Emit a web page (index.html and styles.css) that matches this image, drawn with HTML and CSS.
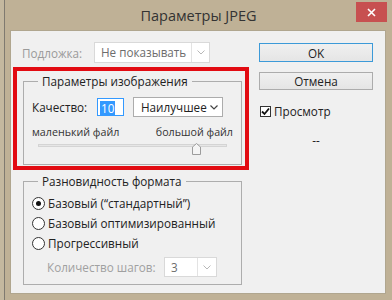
FILE: index.html
```html
<!DOCTYPE html>
<html lang="ru">
<head>
  <meta charset="UTF-8" />
  <meta name="viewport" content="width=device-width, initial-scale=1.0"/>
  <title>Параметры JPEG</title>
  <link rel="stylesheet" href="styles.css">
</head>
<body>

  <div class="window">
    <div class="titlebar">
      <span></span>
      <div class="title">Параметры JPEG</div>
      <button class="close" title="Закрыть">
        <svg width="9" height="9" viewBox="0 0 9 9"><path d="M1 1 L8 8 M8 1 L1 8" stroke="#fff" stroke-width="1.6" fill="none"/></svg>
      </button>
    </div>

    <div class="client">
      <div class="left">

        <div class="matte-row">
          <span class="matte-label">Подложка:</span>
          <div class="select select-matte is-disabled">
            <span class="select-value">Не показывать</span>
            <span class="select-arrow">
              <svg width="8" height="5" viewBox="0 0 8 5"><path d="M0.5 0.5 L4 4 L7.5 0.5" stroke="#b8b8b8" fill="none"/></svg>
            </span>
          </div>
        </div>

        <div class="highlight">
          <fieldset class="group">
            <legend>Параметры изображения</legend>
            <div class="quality-row">
              <span class="quality-label">Качество:</span>
              <span class="quality-input"><span class="selected-text">10</span></span>
              <div class="select select-quality">
                <span class="select-value">Наилучшее</span>
                <span class="select-arrow">
                  <svg width="8" height="5" viewBox="0 0 8 5"><path d="M0.5 0.5 L4 4 L7.5 0.5" stroke="#444" stroke-width="1.2" fill="none"/></svg>
                </span>
              </div>
            </div>
            <div class="size-labels">
              <span>маленький файл</span>
              <span>большой файл</span>
            </div>
            <div class="slider">
              <div class="track"></div>
              <svg class="thumb" style="left: 154px" width="9" height="12" viewBox="0 0 9 12">
                <path d="M0.5 11.5 L0.5 4 L4.5 0.5 L8.5 4 L8.5 11.5 Z" fill="#f4f4f4" stroke="#9c9c9c"/>
              </svg>
            </div>
          </fieldset>
        </div>

        <fieldset class="group format">
          <legend>Разновидность формата</legend>
          <label class="radio-row"><span class="radio checked"></span>Базовый (“стандартный”)</label>
          <label class="radio-row"><span class="radio"></span>Базовый оптимизированный</label>
          <label class="radio-row"><span class="radio"></span>Прогрессивный</label>
          <div class="steps-row">
            <span class="steps-label">Количество шагов:</span>
            <div class="select select-steps is-disabled">
              <span class="select-value">3</span>
              <span class="select-arrow">
                <svg width="8" height="5" viewBox="0 0 8 5"><path d="M0.5 0.5 L4 4 L7.5 0.5" stroke="#b8b8b8" fill="none"/></svg>
              </span>
            </div>
          </div>
        </fieldset>

      </div>

      <div class="right">
        <button class="btn btn-default">OK</button>
        <button class="btn">Отмена</button>
        <label class="check-row">
          <span class="checkbox">
            <svg width="9" height="9" viewBox="0 0 9 9"><path d="M1 4.5 L3.5 7 L8 1.5" stroke="#111" stroke-width="1.8" fill="none"/></svg>
          </span>
          Просмотр
        </label>
        <div class="file-size">--</div>
      </div>
    </div>
  </div>

</body>
</html>
```

FILE: styles.css
```css
body {
  margin: 0;
  width: 392px;
  height: 300px;
  overflow: hidden;
  background-color: #c4b89f;
  font-family: "Open Sans", "Noto Sans", sans-serif;
  font-size: 11.7px;
  color: #222;
}

.window {
  margin-left: 4px;
  width: 387px;
  height: 300px;
  border-left: 1px solid #7f7a70;
  background-color: #bfb196;
}

/* title bar */

.titlebar {
  display: grid;
  grid-template-columns: 1fr auto 1fr;
  align-items: start;
  height: 31px;
}

.title {
  padding-top: 6px;
  font-size: 14.5px;
  color: #333;
}

.close {
  justify-self: end;
  margin: 2px 5px 0 0;
  width: 31px;
  height: 20px;
  padding: 0;
  border: none;
  background-color: #c75050;
  display: flex;
  align-items: center;
  justify-content: center;
}

/* client area */

.client {
  display: flex;
  box-sizing: border-box;
  margin-left: 6px;
  width: 374px;
  height: 262px;
  padding: 11px 0 0 2px;
  background-color: #f0f0f0;
  box-shadow: 0 0 0 1px #b0a68f;
}

.left {
  width: 236px;
}

.right {
  margin-left: 10px;
  width: 114px;
  padding-top: 1px;
  display: flex;
  flex-direction: column;
}

/* selects */

.select {
  display: flex;
  box-sizing: border-box;
  background-color: #fff;
  border: 1px solid #acacac;
}

.select-value {
  flex: 1;
  padding-left: 6px;
  line-height: 18px;
  white-space: nowrap;
}

.select-arrow {
  display: flex;
  align-items: center;
  justify-content: center;
  width: 16px;
}

.select.is-disabled {
  border-color: #d9d9d9;
  color: #6d6d6d;
}

.select.is-disabled .select-arrow {
  border-left: 1px solid #e3e3e3;
}

.matte-row {
  display: flex;
  align-items: center;
  height: 21px;
}

.matte-label {
  width: 72px;
  margin-left: 9px;
  color: #9a9a9a;
}

.select-matte {
  width: 116px;
  height: 21px;
}

.select-matte .select-arrow {
  width: 17px;
}

/* red highlight frame */

.highlight {
  margin-top: 4px;
  border: 4px solid #e20b12;
  padding: 2px 3px 1px 6px;
}

/* group boxes */

.group {
  margin: 0;
  width: 219px;
  box-sizing: border-box;
  border: 1px solid #adadad;
  padding: 8px 8px 9px 8px;
}

.group legend {
  margin-left: 6px;
  padding: 0 4px;
  line-height: 16px;
  color: #222;
}

.quality-row {
  display: flex;
  align-items: center;
  height: 20px;
}

.quality-label {
  width: 65px;
}

.quality-input {
  box-sizing: border-box;
  width: 27px;
  height: 18px;
  border: 1px solid #3399ff;
  background-color: #fff;
  padding: 1px 0 0 2px;
}

.selected-text {
  display: inline-block;
  padding: 0 1px;
  line-height: 15px;
  background-color: #3399ff;
  color: #fff;
}

.select-quality {
  margin-left: 9px;
  width: 90px;
  height: 20px;
}

.select-quality .select-value {
  padding-left: 7px;
}

.size-labels {
  display: flex;
  justify-content: space-between;
  margin-top: 8px;
  font-size: 10.7px;
  line-height: 14px;
  color: #333;
}

.slider {
  position: relative;
  margin: 3px 6px 0 6px;
  height: 11px;
}

.track {
  margin-top: 5px;
  height: 1px;
  border: 1px solid #d4d4d4;
  background-color: #e6e6e6;
}

.thumb {
  position: absolute;
  top: -1px;
}

/* format group */

.format {
  margin: 3px 0 0 10px;
  padding: 4px 8px 7px 8px;
}

.radio-row {
  display: flex;
  align-items: center;
  gap: 3px;
  height: 20px;
}

.radio {
  box-sizing: border-box;
  width: 13px;
  height: 13px;
  border: 1px solid #333;
  border-radius: 50%;
  background-color: #fff;
  display: flex;
  align-items: center;
  justify-content: center;
}

.radio.checked::after {
  content: "";
  width: 5px;
  height: 5px;
  border-radius: 50%;
  background-color: #111;
}

.steps-row {
  display: flex;
  align-items: center;
  margin-top: 4px;
}

.steps-label {
  width: 117px;
  margin-left: 15px;
  color: #a0a0a0;
  white-space: nowrap;
}

.select-steps {
  width: 53px;
  height: 20px;
}

.select-steps .select-arrow {
  width: 18px;
}

/* right column */

.btn {
  box-sizing: border-box;
  width: 114px;
  height: 19px;
  padding: 0;
  border: 1px solid #acacac;
  background: linear-gradient(#f0f0f0, #e5e5e5);
  font-family: inherit;
  font-size: 11.7px;
  line-height: 16px;
  color: #222;
}

.btn-default {
  border-color: #3c9ad8;
}

.btn + .btn {
  margin-top: 10px;
  height: 18px;
}

.check-row {
  display: flex;
  align-items: center;
  gap: 3px;
  margin-top: 13px;
  margin-left: 1px;
  height: 16px;
}

.checkbox {
  box-sizing: border-box;
  width: 11px;
  height: 11px;
  border: 1px solid #333;
  background-color: #fff;
  display: flex;
  align-items: center;
  justify-content: center;
}

.file-size {
  margin-top: 13px;
  text-align: center;
  line-height: 16px;
}
```
